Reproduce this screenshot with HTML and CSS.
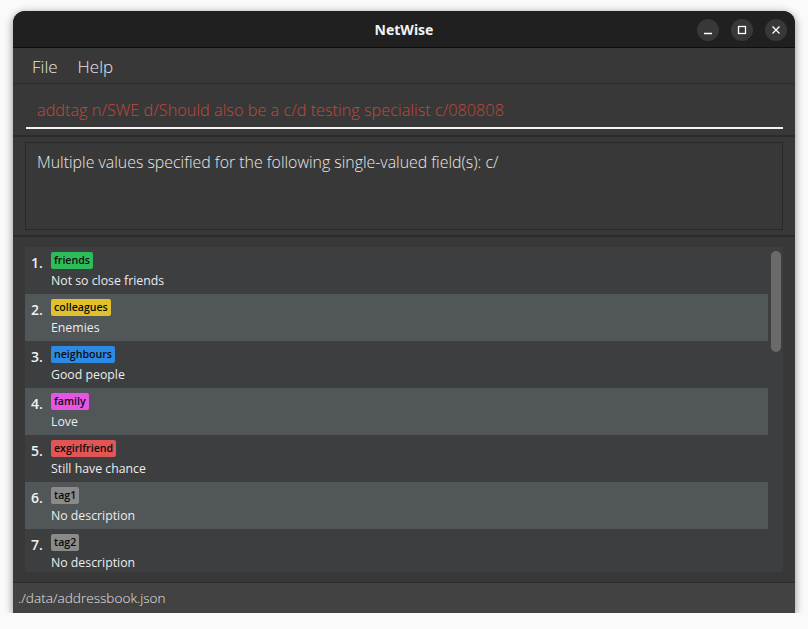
FILE: index.html
```html
<!DOCTYPE html>
<html>
<head>
<meta charset="utf-8">
<link rel="stylesheet" href="styles.css">
</head>
<body>
<div class="window">
  <div class="titlebar">
    <span class="title">NetWise</span>
    <div class="controls">
      <span class="ctl"><svg width="10" height="10" viewBox="0 0 10 10"><path d="M1 8.5h8" stroke="#fff" stroke-width="1.3"/></svg></span>
      <span class="ctl"><svg width="10" height="10" viewBox="0 0 10 10"><rect x="1.5" y="1.5" width="7" height="7" fill="none" stroke="#fff" stroke-width="1.3"/></svg></span>
      <span class="ctl"><svg width="10" height="10" viewBox="0 0 10 10"><path d="M1.5 1.5l7 7M8.5 1.5l-7 7" stroke="#fff" stroke-width="1.3"/></svg></span>
    </div>
  </div>
  <div class="menubar"><span class="menu">File</span><span class="menu">Help</span></div>
  <div class="command-pane">
    <div class="command">addtag n/SWE d/Should also be a c/d testing specialist c/080808</div>
  </div>
  <div class="result-pane">
    <div class="result">Multiple values specified for the following single-valued field(s): c/</div>
  </div>
  <div class="list-pane">
    <div class="list">
      <div class="rows">
        <div class="row"><span class="num">1.</span><div class="info"><span class="tag green">friends</span><span class="desc">Not so close friends</span></div></div>
        <div class="row alt"><span class="num">2.</span><div class="info"><span class="tag yellow">colleagues</span><span class="desc">Enemies</span></div></div>
        <div class="row"><span class="num">3.</span><div class="info"><span class="tag blue">neighbours</span><span class="desc">Good people</span></div></div>
        <div class="row alt"><span class="num">4.</span><div class="info"><span class="tag pink">family</span><span class="desc">Love</span></div></div>
        <div class="row"><span class="num">5.</span><div class="info"><span class="tag red">exgirlfriend</span><span class="desc">Still have chance</span></div></div>
        <div class="row alt"><span class="num">6.</span><div class="info"><span class="tag gray">tag1</span><span class="desc">No description</span></div></div>
        <div class="row"><span class="num">7.</span><div class="info"><span class="tag gray">tag2</span><span class="desc">No description</span></div></div>
      </div>
      <div class="scrolltrack"><div class="thumb"></div></div>
    </div>
  </div>
  <div class="status">./data/addressbook.json</div>
</div>
</body>
</html>
```
FILE: styles.css
```css
html, body {
  margin: 0;
  padding: 0;
  background: #fafafa;
}
body {
  padding: 11px 0 0 13px;
  font-family: "Open Sans", "Noto Sans", sans-serif;
}
.window {
  width: 782px;
  height: 602px;
  border-radius: 12px 12px 0 0;
  overflow: hidden;
  background: #383838;
  box-shadow: 0 2px 8px rgba(0,0,0,0.45);
  display: flex;
  flex-direction: column;
}
.titlebar {
  height: 36px;
  flex: none;
  background: #202020;
  border-bottom: 1px solid #0e0e0e;
  position: relative;
  display: flex;
  align-items: center;
  justify-content: center;
}
.title {
  color: #f2f2f2;
  font-family: "Noto Sans", sans-serif;
  font-weight: 700;
  font-size: 14px;
}
.controls {
  position: absolute;
  right: 8px;
  top: 8px;
  display: flex;
  gap: 12px;
}
.ctl {
  width: 22px;
  height: 22px;
  border-radius: 50%;
  background: #383838;
  display: flex;
  align-items: center;
  justify-content: center;
}
.menubar {
  height: 35px;
  flex: none;
  background: #383838;
  border-bottom: 1px solid #2b2b2b;
  display: flex;
  align-items: center;
  padding-left: 19px;
  padding-top: 2px;
  box-sizing: border-box;
  height: 36px;
  gap: 20px;
}
.menu {
  color: #e6e6e6;
  font-weight: 300;
  font-size: 17px;
}
.command-pane {
  height: 51px;
  flex: none;
  padding: 0 12px 0 13px;
  border-bottom: 2px solid #2b2b2b;
}
.command {
  height: 43px;
  border-bottom: 2px solid #f4f4f4;
  padding-left: 11px;
  color: #c0483c;
  font-weight: 300;
  font-size: 16.3px;
  line-height: 52px;
  white-space: nowrap;
}
.result-pane {
  flex: none;
  padding: 5px 12px 0 12px;
  border-bottom: 2px solid #2b2b2b;
  height: 93px;
}
.result {
  height: 88px;
  border: 1px solid #282828;
  background: #383838;
  color: #e8e8e8;
  font-weight: 300;
  font-size: 15.9px;
  padding: 6px 11px;
  box-sizing: border-box;
  line-height: 26px;
}
.list-pane {
  flex: none;
  height: 346px;
  padding: 10px 12px 10px 12px;
  box-sizing: border-box;
  border-bottom: 1px solid #2b2b2b;
}
.list {
  height: 325px;
  background: #3c3e40;
  display: flex;
  overflow: hidden;
}
.rows {
  width: 743px;
  flex: none;
}
.row {
  height: 47px;
  background: #3c3e40;
  display: flex;
  box-sizing: border-box;
  padding: 5px 0 0 6px;
}
.row.alt {
  background: #515658;
}
.num {
  color: #f2f2f2;
  font-weight: 600;
  font-size: 14px;
  line-height: 19px;
  width: 20px;
  padding-top: 1px;
}
.info {
  display: flex;
  flex-direction: column;
  align-items: flex-start;
}
.tag {
  font-size: 10.6px;
  font-weight: 600;
  color: #0c0c0c;
  border-radius: 2px;
  padding: 0 3px;
  height: 17px;
  line-height: 17px;
}
.green { background: #2ebb5a; }
.yellow { background: #e1c12b; }
.blue { background: #2d8ae4; }
.pink { background: #e855e3; }
.red { background: #e15555; }
.gray { background: #8a8a8a; }
.desc {
  color: #ececec;
  font-size: 12.3px;
  margin-top: 4px;
  line-height: 16px;
}
.scrolltrack {
  flex: 1;
  padding: 4px 2px 0 3px;
}
.thumb {
  width: 10px;
  height: 101px;
  background: #6a6a6a;
  border-radius: 5px;
}
.status {
  flex: 1;
  background: #424242;
  color: #e2e2e2;
  font-weight: 300;
  font-size: 13.6px;
  padding-left: 5px;
  line-height: 30px;
}
```
